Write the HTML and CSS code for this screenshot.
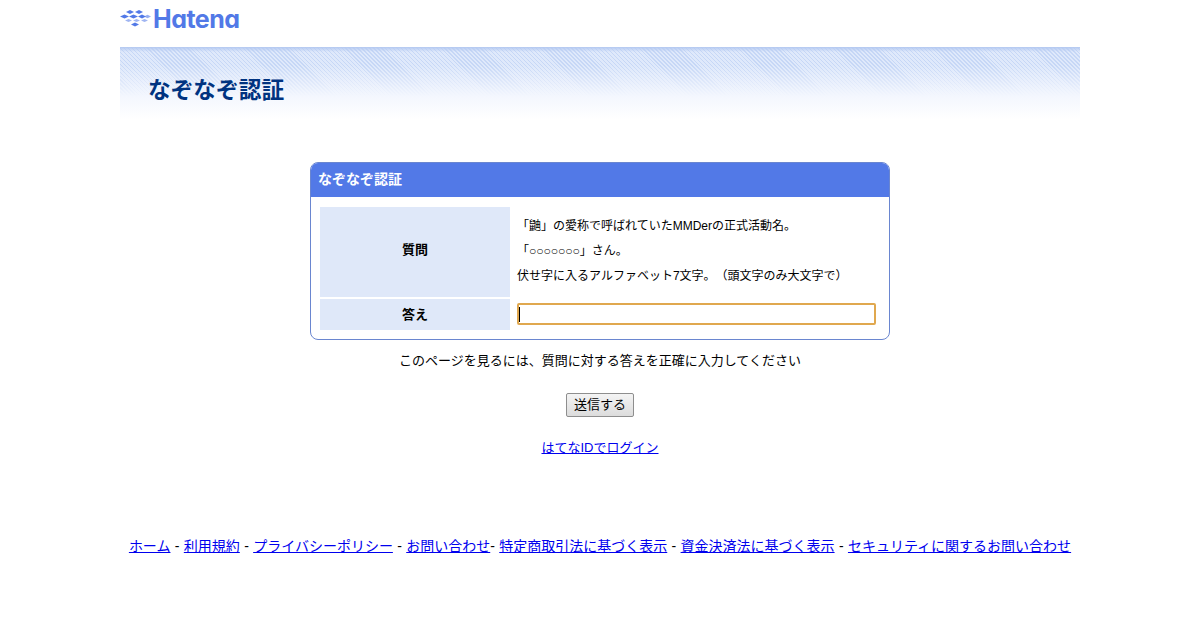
FILE: index.html
```html
<!DOCTYPE html>
<html lang="ja">
<head>
<meta charset="utf-8">
<title>なぞなぞ認証</title>
<link rel="stylesheet" href="styles.css">
</head>
<body>
<div class="page">
  <header class="logo">
    <svg class="logo-mark" width="31" height="18" viewBox="0 0 31 18" aria-hidden="true">
      <g fill="#5279e7">
        <path d="M6 3l4-2 4 2-4 2zM15 3l4-2 4 2-4 2z"/>
        <path d="M0 7.500l4.500-2 4.500 2-4.500 2zM9 7.500l4.500-2 4.500 2-4.500 2z"/>
        <path d="M18 7.500l4-2 4 2-4 2z"/>
        <path d="M24 7.500l3.500-1.800 3.500 1.800-3.500 1.800z" opacity=".6"/>
        <path d="M5 11.500l3.500-1.600 3.500 1.600-3.500 1.600zM13 11.500l3.500-1.600 3.500 1.600-3.500 1.600zM21 11.500l3.500-1.600 3.500 1.600-3.500 1.600z" opacity=".55"/>
        <path d="M11 15.500l4-2 4 2-4 2z"/>
      </g>
    </svg>
    <span class="logo-text">Hatena</span>
  </header>
  <div class="banner"><h1>なぞなぞ認証</h1></div>
  <main class="main">
    <section class="box">
      <h2 class="box-title">なぞなぞ認証</h2>
      <table class="quiz">
        <tr>
          <th>質問</th>
          <td>
            <p>「鼬」の愛称で呼ばれていたMMDerの正式活動名。</p>
            <p>「○○○○○○○」さん。</p>
            <p>伏せ字に入るアルファベット7文字。（頭文字のみ大文字で）</p>
          </td>
        </tr>
        <tr>
          <th>答え</th>
          <td><input class="answer" type="text" autofocus></td>
        </tr>
      </table>
    </section>
    <p class="note">このページを見るには、質問に対する答えを正確に入力してください</p>
    <button class="send" type="button">送信する</button>
    <p class="login"><a href="#">はてなIDでログイン</a></p>
  </main>
  <footer class="footer">
    <a href="#">ホーム</a> - <a href="#">利用規約</a> - <a href="#">プライバシーポリシー</a> - <a href="#">お問い合わせ</a>- <a href="#">特定商取引法に基づく表示</a> - <a href="#">資金決済法に基づく表示</a> - <a href="#">セキュリティに関するお問い合わせ</a>
  </footer>
</div>
</body>
</html>
```
FILE: styles.css
```css
html, body {
  margin: 0;
  padding: 0;
  background: #fff;
  color: #000;
}
body {
  font-family: "Liberation Sans", "Noto Sans CJK JP", sans-serif;
  font-size: 13px;
  text-spacing-trim: space-all;
}
a { color: #0000ee; }
.page {
  width: 960px;
  margin: 0 auto;
}
.logo {
  height: 47px;
  display: flex;
  align-items: flex-start;
  gap: 2px;
  padding-top: 5px;
  box-sizing: border-box;
}
.logo-mark { margin-top: 4px; }
.logo-text {
  font-family: "Inter", sans-serif;
  font-feature-settings: "cv11" 1;
  font-weight: 700;
  font-size: 25px;
  line-height: 28px;
  letter-spacing: -0.5px;
  color: #5279e7;
}
.banner {
  height: 73px;
  box-sizing: border-box;
  padding: 27px 0 0 28px;
  background:
    linear-gradient(to bottom, #b4c9f1 0, rgba(180,201,241,0) 5px),
    linear-gradient(to bottom, rgba(255,255,255,0) 25%, #f4f7fe 68%, #fff 100%),
    repeating-linear-gradient(45deg, #c6d7f6 0 1px, #dfe9fb 1px 2.8px),
    #e2ebfb;
}
.banner h1 {
  margin: 0;
  font-size: 22.7px;
  line-height: 32px;
  font-weight: 700;
  color: #003380;
}
.main {
  margin-top: 42px;
  text-align: center;
}
.box {
  width: 580px;
  height: 178px;
  box-sizing: border-box;
  margin: 0 auto;
  border: 1px solid #6a86d0;
  border-radius: 8px;
  overflow: hidden;
}
.box-title {
  margin: 0;
  height: 34px;
  padding-left: 7px;
  background: #5279e7;
  color: #fff;
  font-size: 14px;
  font-weight: 700;
  line-height: 32px;
  text-align: left;
}
.quiz {
  width: 560px;
  margin: 10px 0 0 9px;
  border-collapse: separate;
  border-spacing: 0;
}
.quiz th {
  width: 190px;
  padding: 0;
  background: #dfe8f9;
  font-size: 13px;
  border-bottom: 2px solid #fff;
}
.quiz tr:last-child th { border-bottom: 0; height: 28px; padding-bottom: 3px; }
.quiz tr:first-child th { height: 83px; padding-bottom: 7px; }
.quiz td {
  padding: 0 0 0 7px;
  text-align: left;
  font-size: 12px;
}
.quiz td p {
  margin: 0;
  line-height: 25px;
  position: relative;
  top: -2px;
}
.answer {
  display: block;
  width: 359px;
  height: 22px;
  box-sizing: border-box;
  margin: -1px 0 0;
  padding: 1px 2px;
  border: 2px solid #e0a84f;
  border-radius: 2px;
  outline: 0;
  background: linear-gradient(#000, #000) 0 center / 1px 15px no-repeat #fff;
}
.note {
  margin: 12px 0 0;
  line-height: 18px;
}
.send {
  display: block;
  width: 68px;
  height: 24px;
  margin: 23px auto 0;
  padding: 0 0 3px;
  border: 1px solid #8e8e8e;
  border-radius: 2px;
  background: linear-gradient(#f4f4f4, #dcdcdc);
  font: 13px "Liberation Sans", "Noto Sans CJK JP", sans-serif;
  color: #000;
}
.login {
  margin: 22px 0 0;
  line-height: 18px;
}
.footer {
  margin-top: 80px;
  text-align: center;
  font-size: 14px;
  line-height: 18px;
  word-spacing: 0.45px;
}
```
